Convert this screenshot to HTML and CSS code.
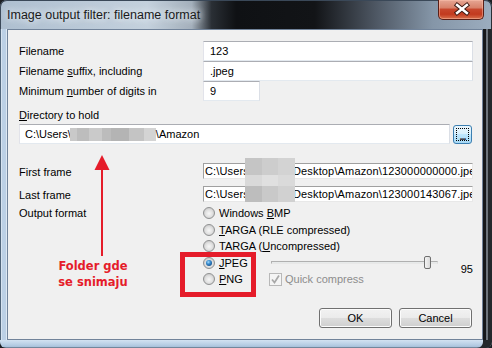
FILE: index.html
```html
<!DOCTYPE html>
<html>
<head>
<meta charset="utf-8">
<title>Image output filter: filename format</title>
<link rel="stylesheet" href="styles.css">
</head>
<body>
<div class="window">
  <div class="titlebar">
    <span class="title">Image output filter: filename format</span>
    <div class="close">
      <svg width="46" height="20" viewBox="0 0 46 20">
        <path d="M19.5 6 L29.5 14 M29.5 6 L19.5 14" stroke="#3b1812" stroke-width="4.6" stroke-linecap="square" fill="none"/>
        <path d="M19.5 6 L29.5 14 M29.5 6 L19.5 14" stroke="#ffffff" stroke-width="2.6" stroke-linecap="square" fill="none"/>
      </svg>
    </div>
  </div>
  <div class="middle">
    <div class="frame-left"></div>
    <div class="client">
      <div class="grid-top">
        <span class="lbl">Filename</span><div class="input">123</div>
        <span class="lbl">Filename <u>s</u>uffix, including</span><div class="input">.jpeg</div>
        <span class="lbl">Minimum <u>n</u>umber of digits in</span><div class="input short">9</div>
      </div>
      <div class="dir-label"><u>D</u>irectory to hold</div>
      <div class="dir-row">
        <div class="input dir"><span>C:\Users\</span><span class="blur"><i class="b1"></i><i class="b2"></i><i class="b3"></i><i class="b4"></i><i class="b5"></i><i class="b6"></i><i class="b7"></i></span><span>\Amazon</span></div>
        <div class="browse"><span class="focus">...</span></div>
      </div>
      <div class="frames">
        <span class="lbl">First frame</span><div class="ro">C:\Users<span class="hide"></span>Desktop\Amazon\123000000000.jpeg</div>
        <span class="lbl">Last frame</span><div class="ro">C:\Users<span class="hide"></span>Desktop\Amazon\123000143067.jpeg</div>
      </div>
      <div class="format">
        <span class="lbl">Output format</span>
        <div class="options">
          <div class="opt full"><span class="radio"></span><span>Windows <u>B</u>MP</span></div>
          <div class="opt full"><span class="radio"></span><span><u>T</u>ARGA (RLE compressed)</span></div>
          <div class="opt full"><span class="radio"></span><span>TARGA (<u>U</u>ncompressed)</span></div>
          <div class="opt"><span class="radio on"></span><span><u>J</u>PEG</span></div>
          <div class="slider"><div class="track"></div><div class="thumb"></div></div>
          <div class="value">95</div>
          <div class="opt"><span class="radio"></span><span><u>P</u>NG</span></div>
          <div class="check">
            <svg width="13" height="13" viewBox="0 0 13 13"><rect x="0.5" y="0.5" width="12" height="12" fill="#f4f4f4" stroke="#b8b8b8"/><path d="M3 6.5 L5.5 9.5 L10 2.5" stroke="#a8a8a8" stroke-width="1.7" fill="none"/></svg>
            <span>Quick compress</span>
          </div>
        </div>
      </div>
      <div class="buttons">
        <div class="btn">OK</div>
        <div class="btn">Cancel</div>
      </div>
    </div>
    <div class="frame-right"></div>
  </div>
  <div class="frame-bottom"></div>

  <div class="mosaic"><i></i><i></i><i></i><i></i><i></i><i></i><i></i><i></i><i></i></div>
  <div class="redbox"></div>
  <svg class="arrow" width="18" height="104" viewBox="0 0 18 104">
    <path d="M8 1 L0.5 16 L15.5 16 Z" fill="#e51c2a"/>
    <rect x="7" y="14" width="2" height="88" fill="#e51c2a"/>
  </svg>
  <div class="note">Folder gde<br>se snimaju</div>
</div>
</body>
</html>
```
FILE: styles.css
```css
* { box-sizing: border-box; }
html, body { margin: 0; padding: 0; }
body {
  width: 492px; height: 348px; overflow: hidden;
  background: #1c1f23;
  font-family: "Liberation Sans", Arial, sans-serif;
  font-size: 11px; color: #000;
}
u { text-decoration: underline; text-underline-offset: 1px; }
.window { position: relative; width: 492px; height: 348px; display: flex; flex-direction: column; }

.titlebar {
  height: 29px; flex: none; display: flex; align-items: flex-start;
  padding-left: 7px; border-radius: 7px 7px 0 0;
  background: linear-gradient(to right, #aebfd0 0, #c4d1dd 30%, #a3afbb 39%, #2a2f35 43%, #0f1114 48%, #121417 64%, #4c5561 76%, #8596a8 88%, #9cadbf 100%);
  box-shadow: inset 0 1px 0 #3a4858, inset 1px 0 0 #3a4858, inset -1px 0 0 #2a2f35;
}
.title {
  margin-top: 8px; line-height: 14px; font-size: 12.5px; color: #1a1a1a;
  text-shadow: 0 0 6px #e8eef4, 0 0 10px #e8eef4;
}
.close {
  margin-left: auto; margin-right: 8px; width: 46px; height: 20px;
  border: 1px solid #5a1f17; border-top: 0; border-radius: 0 0 5px 5px;
  background: linear-gradient(#e6a694 0, #d8826b 40%, #c7462c 50%, #c23a1f 75%, #d8704c 100%);
  box-shadow: inset 0 0 0 1px rgba(255,200,180,0.45);
  display: flex;
}
.close svg { margin: -1px 0 0 -1px; }

.middle { flex: 1; display: flex; }
.frame-left {
  width: 7px; flex: none;
  background: linear-gradient(to right, #52667b 0 1px, #d6e3f0 1px 2px, #bcd0e5 2px 6px, #dde8f3 6px);
}
.frame-right {
  width: 9px; flex: none;
  background: linear-gradient(to right, #15171a 0 3px, #6d747c 3px 5px, #24282c 5px);
}
.frame-bottom {
  height: 8px; flex: none; border-radius: 0 0 6px 6px;
  background: linear-gradient(#d3e2f1 0, #b7cde4 60%, #a9c1da 85%, #4b5d70 100%);
  box-shadow: inset -9px 0 0 #24282c;
}
.client {
  flex: 1; display: flex; flex-direction: column;
  background: #f0f0f0; border: 1px solid #71839a;
  padding: 11px 9px 0 11px;
}
.lbl { display: block; white-space: nowrap; }

.grid-top { display: grid; grid-template-columns: 184px 1fr; grid-auto-rows: 20px; }
.grid-top .lbl { line-height: 20px; }
.input {
  height: 20px; background: #fff; padding-left: 6px;
  border: 1px solid; border-color: #abadb3 #dbdfe6 #e3e9ef #e2e3ea;
  display: flex; align-items: center; white-space: nowrap;
}
.input.short { width: 57px; }

.dir-label { margin-top: 7px; line-height: 14px; }
.dir-row { margin-top: 2px; display: flex; gap: 3px; height: 20px; padding-right: 1px; }
.input.dir { flex: 1; padding-left: 5px; }
.blur { display: flex; height: 13px; margin-left: -1px; }
.blur i { display: block; height: 13px; }
.b1 { width: 7px; background: #c9c9c9; }
.b2 { width: 12px; background: #bdbdbd; }
.b3 { width: 13px; background: #cacaca; }
.b4 { width: 9px; background: #bcbcbc; }
.b5 { width: 18px; background: #b4b4b4; }
.b6 { width: 15px; background: #c4c4c4; }
.b7 { width: 12px; background: #d4d4d4; }
.browse {
  width: 19px; height: 19px; margin-top: 1px; border: 1px solid #3c7fb1; border-radius: 3px;
  background: linear-gradient(#eaf6fd 0, #d9f0fc 45%, #bee6fd 50%, #a7d9f5 100%);
  padding: 2px;
}
.focus {
  display: flex; width: 100%; height: 100%; border: 1px dotted #000;
  justify-content: center; align-items: flex-end;
  font-size: 11px; line-height: 8px; font-weight: bold; letter-spacing: -1px; color: #222;
}

.frames { margin-top: 19px; display: grid; grid-template-columns: 184px 1fr; grid-auto-rows: 16px; row-gap: 7px; }
.frames .lbl { line-height: 18px; }
.ro {
  height: 16px; background: #fff; border: 1px solid; border-color: #a0a0a0 #e8e8e8 #e8e8e8 #a0a0a0;
  padding-left: 1px; white-space: nowrap; overflow: hidden; line-height: 14px; letter-spacing: 0.15px;
}
.hide { display: inline-block; width: 44px; }

.format { margin-top: 3px; display: grid; grid-template-columns: 184px 1fr; }
.format > .lbl { line-height: 17px; }
.options { display: grid; grid-template-columns: 66px 1fr 20px; grid-auto-rows: 16.5px; }
.opt { display: flex; align-items: center; white-space: nowrap; }
.opt.full { grid-column: 1 / 4; }
.radio {
  width: 12px; height: 12px; border-radius: 50%; margin-right: 4px; flex: none;
  border: 1px solid #8f9091;
  background: radial-gradient(circle at 50% 55%, #f7f7f7 0, #e2e2e2 45%, #cfcfcf 70%, #f2f2f2 100%);
  display: flex; align-items: center; justify-content: center;
}
.radio.on::after {
  content: ""; width: 6px; height: 6px; border-radius: 50%;
  background: radial-gradient(circle at 40% 35%, #a6dcff 0, #3c8fd0 35%, #104d8a 80%);
}
.slider { position: relative; margin-left: 2px; width: 167px; display: flex; align-items: center; }
.track {
  width: 100%; height: 3px; background: #e7eaea;
  border: 1px solid; border-color: #b0b0b0 #dcdcdc #e8e8e8 #b0b0b0;
}
.thumb {
  position: absolute; left: 153px; top: 1px; width: 7px; height: 13px;
  border: 1px solid #6f6f6f; border-radius: 2px;
  background: linear-gradient(to right, #f4f4f4, #dadada);
}
.value { grid-row: 4 / 6; grid-column: 3; display: flex; align-items: center; justify-content: flex-end; padding-bottom: 4px; }
.check { display: flex; align-items: center; gap: 3px; color: #8d8d8d; white-space: nowrap; }

.buttons { margin-top: 20px; display: flex; justify-content: flex-end; gap: 7px; padding-right: 1px; }
.btn {
  width: 73px; height: 20px; border: 1px solid #707070; border-radius: 3px;
  background: linear-gradient(#f2f2f2 0, #ebebeb 49%, #dddddd 51%, #cfcfcf 100%);
  box-shadow: inset 0 0 0 1px #fcfcfc;
  display: flex; align-items: center; justify-content: center;
}

.mosaic {
  position: absolute; left: 245px; top: 158px; width: 50px; height: 44px;
  display: grid; grid-template-columns: 17px 16px 17px; grid-template-rows: 17px 11px 16px;
}
.mosaic i:nth-child(1) { background: #c5c5c5; }
.mosaic i:nth-child(2) { background: #cdcdcd; }
.mosaic i:nth-child(3) { background: #d3d3d3; }
.mosaic i:nth-child(4) { background: #d9d9d9; }
.mosaic i:nth-child(5) { background: #e0e0e0; }
.mosaic i:nth-child(6) { background: #dadada; }
.mosaic i:nth-child(7) { background: #bdbdbd; }
.mosaic i:nth-child(8) { background: #c9c9c9; }
.mosaic i:nth-child(9) { background: #d1d1d1; }

.redbox { position: absolute; left: 180px; top: 252px; width: 76px; height: 45px; border: 5px solid #e51c2a; }
.arrow { position: absolute; left: 94px; top: 154px; }
.note {
  position: absolute; left: 43px; top: 258px; width: 100px; text-align: center;
  font-family: "DejaVu Sans", Verdana, sans-serif; font-weight: bold; font-size: 11.5px; line-height: 16px;
  color: #e51c2a;
}
```
